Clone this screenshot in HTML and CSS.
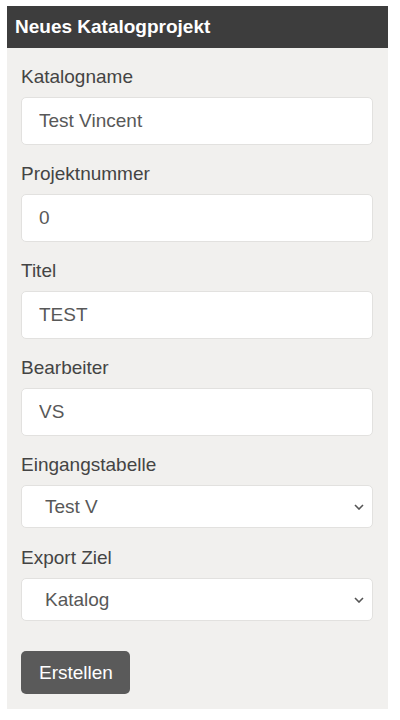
FILE: index.html
```html
<!DOCTYPE html>
<html lang="de">
<head>
    <meta charset="UTF-8">
    <meta name="viewport" content="width=device-width, initial-scale=1.0">
    <title>Neues Katalogprojekt</title>
    <link rel="stylesheet" href="styles.css">
</head>
<body>
    <div class="panel">
        <div class="panel-header">Neues Katalogprojekt</div>

        <form class="panel-form">
            <div class="field">
                <label for="catalogName">Katalogname</label>
                <input type="text" id="catalogName" value="Test Vincent">
            </div>

            <div class="field">
                <label for="projectNumber">Projektnummer</label>
                <input type="text" id="projectNumber" value="0">
            </div>

            <div class="field">
                <label for="title">Titel</label>
                <input type="text" id="title" value="TEST">
            </div>

            <div class="field">
                <label for="editor">Bearbeiter</label>
                <input type="text" id="editor" value="VS">
            </div>

            <div class="field field-select">
                <label for="inputTable">Eingangstabelle</label>
                <div class="select-wrap">
                    <select id="inputTable">
                        <option>Test V</option>
                    </select>
                    <svg class="chevron" width="10" height="6" viewBox="0 0 10 6">
                        <path d="M1 1 L5 5 L9 1" fill="none" stroke="#555" stroke-width="1.6"/>
                    </svg>
                </div>
            </div>

            <div class="field field-select">
                <label for="exportTarget">Export Ziel</label>
                <div class="select-wrap">
                    <select id="exportTarget">
                        <option>Katalog</option>
                    </select>
                    <svg class="chevron" width="10" height="6" viewBox="0 0 10 6">
                        <path d="M1 1 L5 5 L9 1" fill="none" stroke="#555" stroke-width="1.6"/>
                    </svg>
                </div>
            </div>

            <button type="button" class="btn-create">Erstellen</button>
        </form>
    </div>
</body>
</html>
```

FILE: styles.css
```css
body {
    margin: 0;
    background-color: #fff;
    font-family: "Liberation Sans", Arial, sans-serif;
}
.panel {
    width: 381px;
    margin: 6px 0 0 7px;
    background-color: #f1f0ee;
}
.panel-header {
    height: 42px;
    line-height: 42px;
    padding-left: 8px;
    background-color: #3d3d3d;
    color: #fff;
    font-size: 19px;
    font-weight: bold;
}
.panel-form {
    padding: 18px 15px 15px 14px;
}
.field {
    margin-bottom: 18px;
}
.field + .field {
    margin-top: 1px;
}
.field-select {
    margin-bottom: 19px;
}
.field label {
    display: block;
    height: 22px;
    line-height: 22px;
    margin-bottom: 9px;
    font-size: 19px;
    color: #444;
}
.field input,
.field select {
    box-sizing: border-box;
    display: block;
    width: 100%;
    height: 48px;
    padding: 0 17px;
    border: 1px solid #e2e1df;
    border-radius: 5px;
    background-color: #fff;
    font-family: inherit;
    font-size: 19px;
    color: #585858;
    outline: none;
}
.field select {
    height: 43px;
    padding-left: 23px;
    appearance: none;
    -webkit-appearance: none;
}
.select-wrap {
    position: relative;
}
.chevron {
    position: absolute;
    right: 9px;
    top: 19px;
}
.btn-create {
    margin-top: 11px;
    height: 43px;
    padding: 0 17px 0 18px;
    border: none;
    border-radius: 5px;
    background-color: #5a5a5a;
    color: #fff;
    font-family: inherit;
    font-size: 19px;
    cursor: pointer;
}
```
